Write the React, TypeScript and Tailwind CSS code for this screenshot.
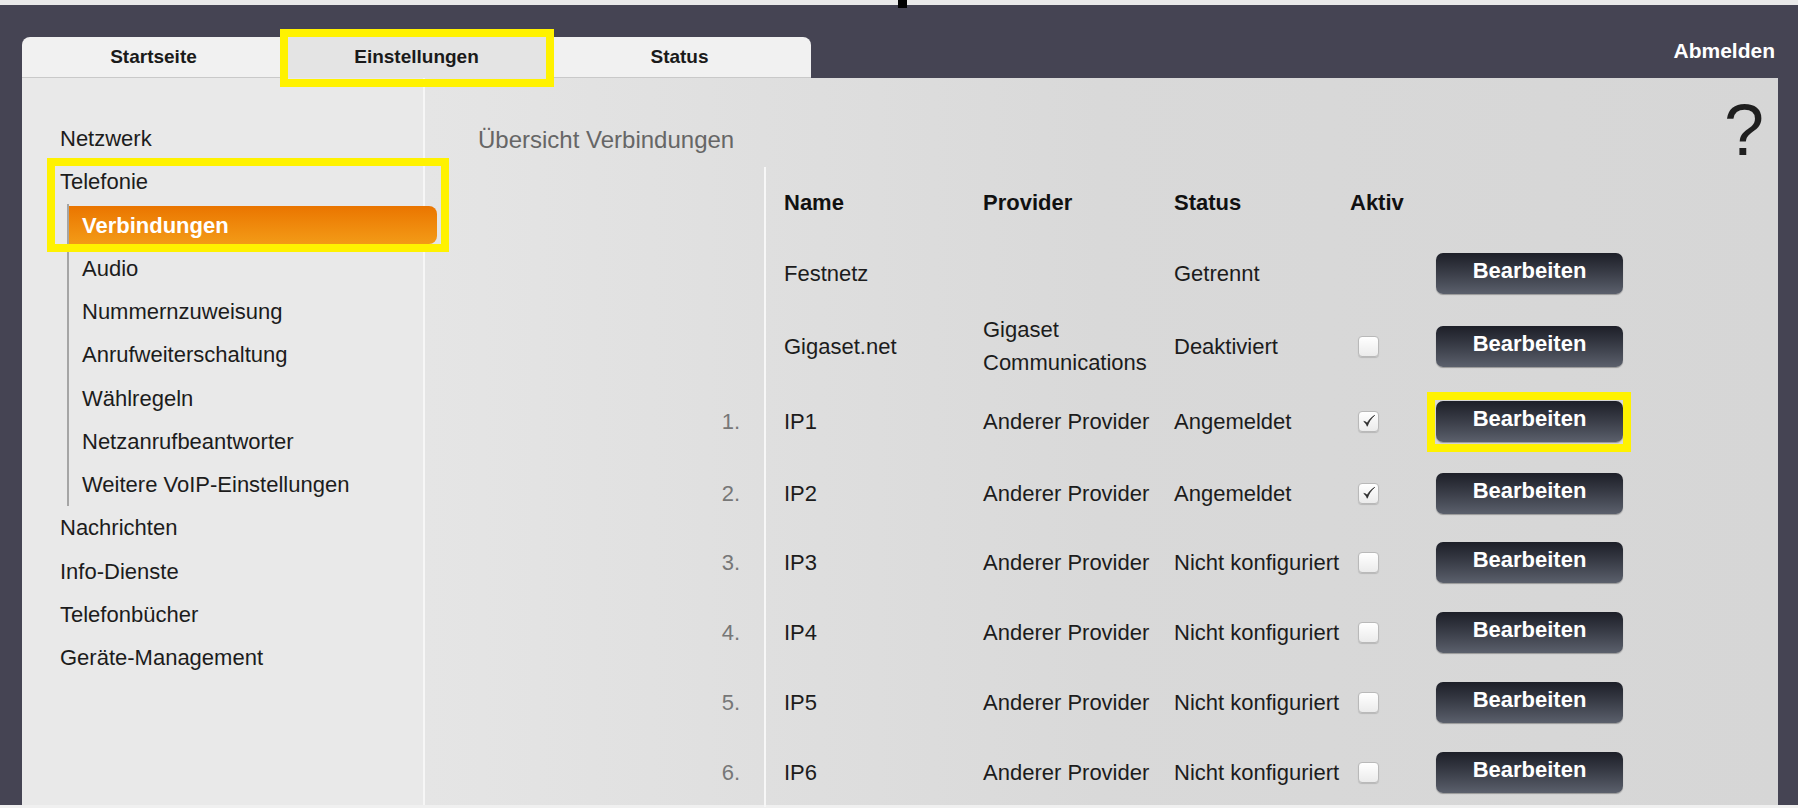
import React from 'react';

type Row = {
  num?: string;
  name: string;
  provider: React.ReactNode;
  status: string;
  active?: boolean | null;
  h: string;
  marked?: boolean;
};

const rows: Row[] = [
  { name: 'Festnetz', provider: '', status: 'Getrennt', active: null, h: 'h-[72px]' },
  {
    name: 'Gigaset.net',
    provider: (
      <span className="leading-[29px]">
        Gigaset
        <br />
        Communications
      </span>
    ),
    status: 'Deaktiviert',
    active: false,
    h: 'h-[74px]',
  },
  { num: '1.', name: 'IP1', provider: 'Anderer Provider', status: 'Angemeldet', active: true, h: 'h-[76px]', marked: true },
  { num: '2.', name: 'IP2', provider: 'Anderer Provider', status: 'Angemeldet', active: true, h: 'h-[68px]' },
  { num: '3.', name: 'IP3', provider: 'Anderer Provider', status: 'Nicht konfiguriert', active: false, h: 'h-[70px]' },
  { num: '4.', name: 'IP4', provider: 'Anderer Provider', status: 'Nicht konfiguriert', active: false, h: 'h-[70px]' },
  { num: '5.', name: 'IP5', provider: 'Anderer Provider', status: 'Nicht konfiguriert', active: false, h: 'h-[70px]' },
  { num: '6.', name: 'IP6', provider: 'Anderer Provider', status: 'Nicht konfiguriert', active: false, h: 'h-[70px]' },
];

const subItems = ['Audio', 'Nummernzuweisung', 'Anrufweiterschaltung', 'Wählregeln', 'Netzanrufbeantworter', 'Weitere VoIP-Einstellungen'];
const bottomItems = ['Nachrichten', 'Info-Dienste', 'Telefonbücher', 'Geräte-Management'];

const Checkbox: React.FC<{ checked: boolean }> = ({ checked }) => (
  <div className="ml-[8px] w-[21px] h-[21px] rounded-[4px] border border-[#b9b9b9] bg-gradient-to-b from-white to-[#ebebeb] shadow-[0_1px_1px_rgba(0,0,0,0.15)] flex items-center justify-center">
    {checked && (
      <svg width="14" height="14" viewBox="0 0 16 16">
        <path d="M2 8.5 C3.5 9.5 5 11.5 6 14 C8 8.5 10.5 5 14.5 1.5 C10.5 4 8 7 5.8 10.5 C5 9.5 4 8.5 2 8.5 Z" fill="#2b2b2b" stroke="#2b2b2b" strokeWidth="0.8" strokeLinejoin="round" />
      </svg>
    )}
  </div>
);

const EditButton: React.FC<{ marked?: boolean }> = ({ marked }) => (
  <div className="relative">
    <button className="w-[187px] h-[41px] rounded-[7px] bg-gradient-to-b from-[#1d1f28] to-[#5b606c] text-white font-bold text-[22px] leading-none pb-[5px] flex items-center justify-center shadow-[0_1px_1px_rgba(0,0,0,0.3)]">
      Bearbeiten
    </button>
    {marked && <div className="absolute -left-[9px] -top-[9px] -right-[8px] -bottom-[10px] border-[8px] border-[#fff200]" />}
  </div>
);

export default function App() {
  return (
    <div className="relative w-[1798px] h-[808px] overflow-hidden bg-[#454453] font-['Liberation_Sans',Arial,sans-serif] text-[#1c1c1c]">
      <div className="h-[5px] bg-[#e9e9e9]" />
      <div className="absolute left-[898px] top-0 w-[9px] h-[8px] bg-black" />

      {/* header with tabs */}
      <div className="flex justify-between h-[73px]">
        <div className="self-end flex ml-[22px]">
          <div className="w-[263px] h-[41px] rounded-tl-[8px] bg-[#f1f1f1] border-b border-[#c9c9c9] flex items-center justify-center font-bold text-[19px] text-[#1a1a1a]">
            Startseite
          </div>
          <div className="relative w-[263px] h-[41px] bg-[#e4e4e4] flex items-center justify-center font-bold text-[19px] text-[#1a1a1a]">
            Einstellungen
            <div className="absolute -left-[5px] -right-[6px] -top-[8px] -bottom-[9px] border-[8px] border-[#fff200] z-20" />
          </div>
          <div className="w-[263px] h-[41px] rounded-tr-[8px] bg-[#f1f1f1] border-b border-[#c9c9c9] flex items-center justify-center font-bold text-[19px] text-[#1a1a1a]">
            Status
          </div>
        </div>
        <div className="mt-[34px] mr-[23px] text-white font-bold text-[21px] leading-[24px]">Abmelden</div>
      </div>

      {/* content panel */}
      <div className="flex ml-[22px] mr-[20px] h-[727px]">
        <div className="relative w-[403px] shrink-0 bg-[#e9e9e9] border-r-2 border-[#f6f6f6] pt-[39px] pl-[38px] text-[22px]">
          <div className="h-[43.25px] flex items-center">Netzwerk</div>
          <div className="h-[43.25px] flex items-center">Telefonie</div>
          <div className="ml-[7px] border-l-2 border-[#a5a5a5]">
            <div className="h-[43.25px] flex items-center">
              <div className="relative z-10 shrink-0 w-[368px] h-[38px] pl-[13px] flex items-center rounded-r-[8px] bg-gradient-to-b from-[#ea7500] to-[#f39b16] text-white font-bold">
                Verbindungen
              </div>
            </div>
            {subItems.map((s) => (
              <div key={s} className="h-[43.25px] flex items-center pl-[13px]">
                {s}
              </div>
            ))}
          </div>
          {bottomItems.map((s) => (
            <div key={s} className="h-[43.25px] flex items-center">
              {s}
            </div>
          ))}
          <div className="absolute left-[25px] top-[80px] w-[402px] h-[94px] border-[8px] border-[#fff200] z-20" />
        </div>

        <div className="relative flex-1 bg-[linear-gradient(to_right,#e5e5e5,#d9d9d9_50%,#d6d6d6)]">
          <div className="pl-[53px] pt-[48px] text-[24px] leading-[28px] text-[#666]">Übersicht Verbindungen</div>
          <div className="absolute right-[14px] top-[16px] text-[72px] leading-none text-[#1f1f1f]">?</div>

          <div className="mt-[13px] text-[22px]">
            <div className="flex h-[70px]">
              <div className="w-[339px]" />
              <div className="flex items-center border-l-2 border-[#f7f7f7] pl-[18px] font-bold text-[#111]">
                <div className="w-[199px]">Name</div>
                <div className="w-[191px]">Provider</div>
                <div className="w-[176px]">Status</div>
                <div className="w-[86px]">Aktiv</div>
              </div>
            </div>
            {rows.map((r) => (
              <div key={r.name} className={`flex ${r.h}`}>
                <div className="w-[339px] pr-[24px] flex items-center justify-end text-[#777]">{r.num}</div>
                <div className="flex items-center border-l-2 border-[#f7f7f7] pl-[18px]">
                  <div className="w-[199px]">{r.name}</div>
                  <div className="w-[191px]">{r.provider}</div>
                  <div className="w-[176px] whitespace-nowrap">{r.status}</div>
                  <div className="w-[86px]">{r.active !== null && r.active !== undefined && <Checkbox checked={r.active} />}</div>
                  <EditButton marked={r.marked} />
                </div>
              </div>
            ))}
          </div>
        </div>
      </div>
      <div className="h-[3px] bg-[#f0f0f0]" />
    </div>
  );
}
